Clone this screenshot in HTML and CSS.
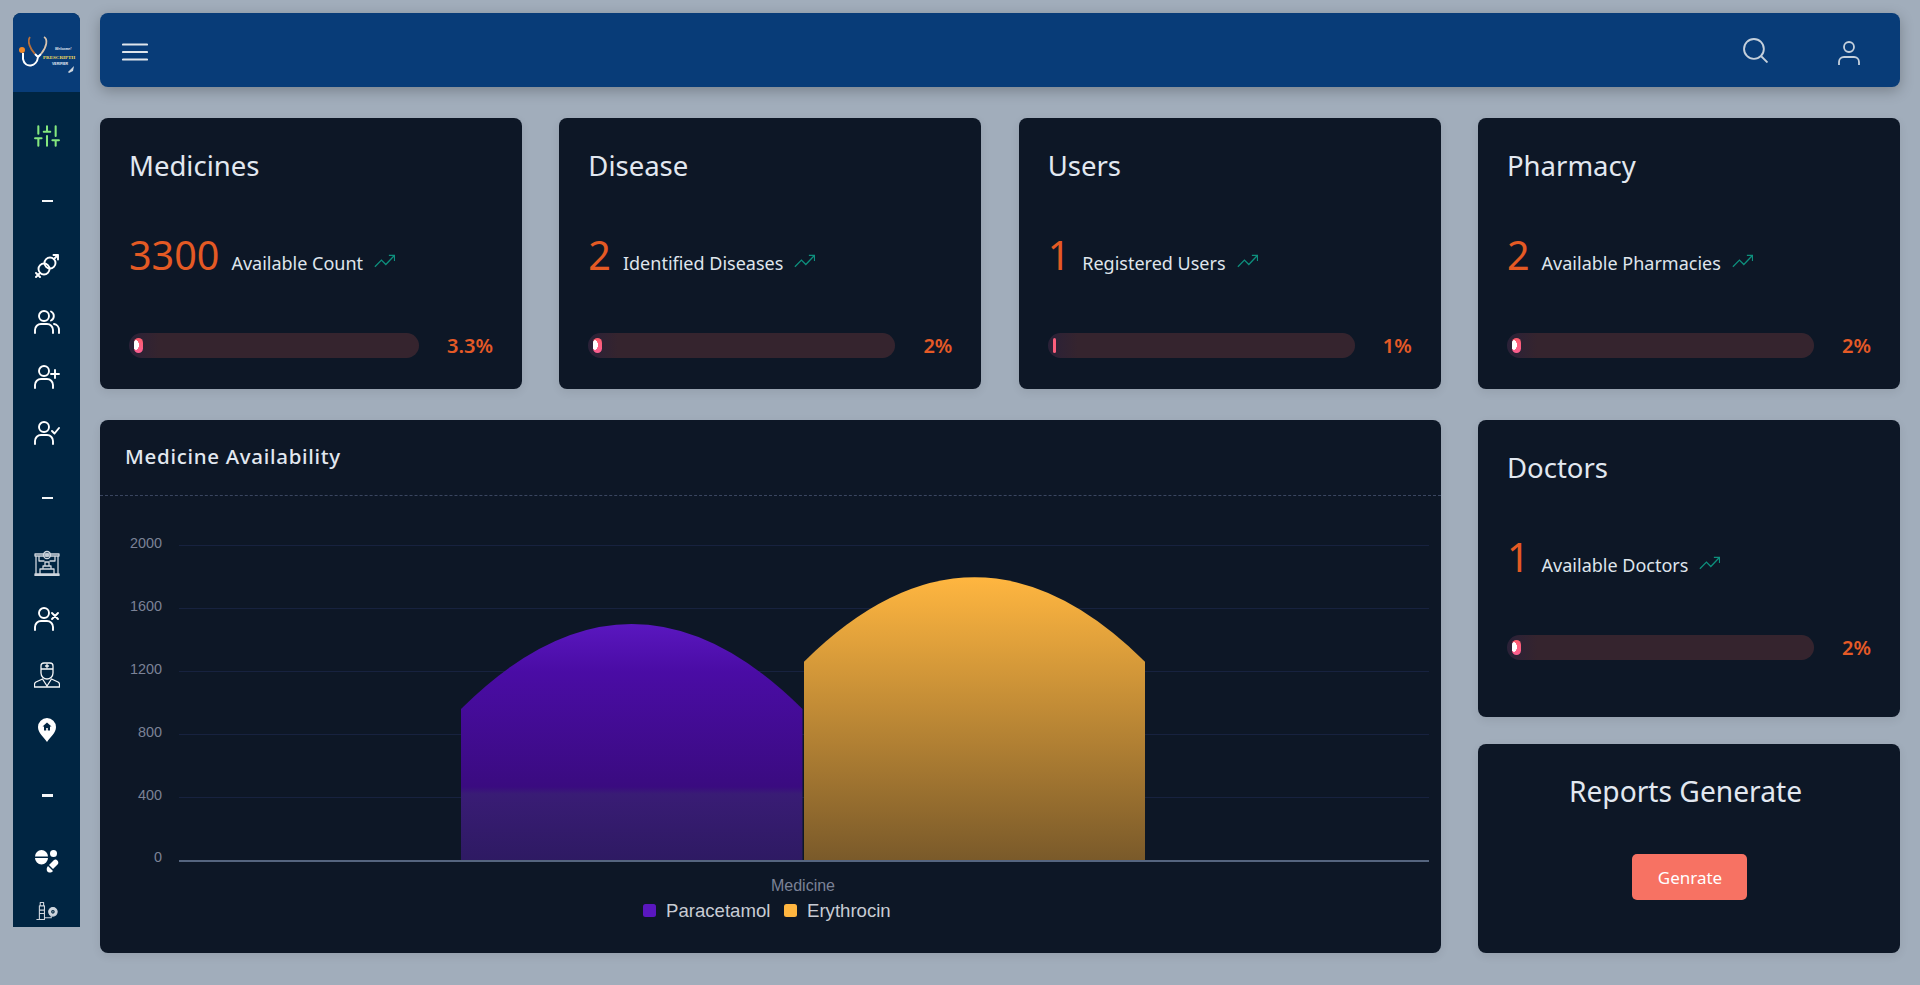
FILE: index.html
```html
<!DOCTYPE html>
<html lang="en">
<head>
    <meta charset="UTF-8">
    <meta name="viewport" content="width=device-width, initial-scale=1.0">
    <title>Prescripth Verifier - Dashboard</title>
    <link rel="stylesheet" href="styles.css">
</head>
<body>
    <aside class="sidebar">
        <div class="sidebar-logo">
            <svg viewBox="13 13 67 79" width="67" height="79">
                <path d="M30 37C27 41 30 49 35 54" fill="none" stroke="#b8703c" stroke-width="1.800"/>
                <path d="M44 37C48 39 47 47 41 54" fill="none" stroke="#d9c4ae" stroke-width="1.800"/>
                <path d="M35 54L38 57C37 67 25 69 23 59V53M41 54L38 57" fill="none" stroke="#fff" stroke-width="2"/>
                <circle cx="22" cy="50" r="3" fill="#f08a2c"/>
                <text x="43" y="59" class="logo-name">PRESCRIPTH</text>
                <text x="52" y="65" class="logo-sub">VERIFIER</text>
                <text x="55" y="50" class="logo-sub logo-hand">Welcome!</text>
                <path d="M68 72L74 66L73 71L69 73Z" fill="#cfd6de"/>
            </svg>
        </div>
        <nav class="nav-list">
            <a class="nav-item nav-active">
                <svg class="icon" viewBox="0 0 24 24"><path d="M4 21v-7M4 10V3M12 21v-9M12 8V3M20 21v-5M20 12V3M1 14h6M9 8h6M17 16h6"/></svg>
            </a>
            <div class="nav-dash"><span></span></div>
            <a class="nav-item">
                <svg class="icon" viewBox="0 0 26 26"><circle cx="10" cy="16" r="5.500"/><circle cx="16" cy="10" r="5.500"/><path d="M20 6l4-4M19.500 2H24v4.500M6 20l-4 4M2 20l4 4"/></svg>
            </a>
            <a class="nav-item">
                <svg class="icon" viewBox="0 0 26 26"><circle cx="10" cy="7" r="5"/><path d="M1 24v-3a6 6 0 0 1 6-6h6a6 6 0 0 1 6 6v3M17 2.500a5 5 0 0 1 0 9M20 15a6 6 0 0 1 5 6v3"/></svg>
            </a>
            <a class="nav-item">
                <svg class="icon" viewBox="0 0 26 26"><circle cx="10" cy="7" r="5"/><path d="M1 24v-3a6 6 0 0 1 6-6h6a6 6 0 0 1 6 6v3M21 6v8M17 10h8"/></svg>
            </a>
            <a class="nav-item">
                <svg class="icon" viewBox="0 0 26 26"><circle cx="10" cy="7" r="5"/><path d="M1 24v-3a6 6 0 0 1 6-6h6a6 6 0 0 1 6 6v3M18 11l2.500 2.500L25 8"/></svg>
            </a>
            <div class="nav-dash"><span></span></div>
            <a class="nav-item">
                <svg class="icon icon-thin" viewBox="0 0 26 26"><path d="M1 4h24v2H1zM2 6v19M24 6v19M1 24h24v1.500H1zM6 24v-5h14v5M9 19v-3h8v3M11 16v-4h4v4M5 6v5h5M21 6v5h-5"/><circle cx="13" cy="5" r="3.500"/><circle cx="13" cy="5" r="1.200"/></svg>
            </a>
            <a class="nav-item">
                <svg class="icon" viewBox="0 0 26 26"><circle cx="10" cy="7" r="5"/><path d="M1 24v-3a6 6 0 0 1 6-6h6a6 6 0 0 1 6 6v3M18 7l6 6M24 7l-6 6"/></svg>
            </a>
            <a class="nav-item">
                <svg class="icon icon-thin icon-bright" viewBox="0 0 26 26"><path d="M7 7V4a3 3 0 0 1 3-3h6a3 3 0 0 1 3 3v3zM7 7v4a6 6 0 0 0 12 0V7M13 2.500v3M11.500 4h3M8.500 17L2 20c-1 .5-1.500 1.500-1.500 2.500V25h25v-2.500c0-1-.5-2-1.500-2.500l-6.500-3L13 24z"/></svg>
            </a>
            <a class="nav-item">
                <svg class="icon-fill" viewBox="0 0 26 26"><path fill-rule="evenodd" d="M13 1a9 9 0 0 1 9 9c0 6-6 10.500-9 15-3-4.500-9-9-9-15a9 9 0 0 1 9-9zM13 5.500L8.500 9.500H10v4h2.200v-2.500h1.600v2.500H16v-4h1.500z"/></svg>
            </a>
            <div class="nav-dash"><span></span></div>
            <a class="nav-item">
                <svg class="icon-fill" viewBox="0 0 26 26"><path d="M1 8.500a6.500 6.500 0 0 1 13 0zM1 10h13a6.500 6.500 0 0 1-13 0z"/><circle cx="19.500" cy="5.500" r="3.500"/><path d="M15 17l5-5c2-2 5.500 1.500 4 4l-5 5zM14 18l5 5c-2 2.500-5.500 1.500-6 0-.5-1.500-.5-3.500 1-5z"/></svg>
            </a>
            <a class="nav-item nav-last">
                <svg class="icon icon-thin icon-small" viewBox="0 0 26 26"><path d="M1 23h8M4 23V7h6v16M5 3h4v4H5zM4 12h6M4 16h6M10 21h8v-2"/><circle cx="20" cy="14" r="5" fill="#cfd6de"/><circle cx="20" cy="14" r="1.500" stroke="#00263f"/></svg>
            </a>
        </nav>
    </aside>

    <div class="content">
        <header class="topbar">
            <svg class="menu-icon" viewBox="0 0 26 18"><path d="M1 1.500h24M1 9h24M1 16.500h24"/></svg>
            <div class="topbar-right">
                <svg class="search-icon" viewBox="0 0 24 24"><circle cx="10.500" cy="10.500" r="9.500"/><path d="M17.500 17.500l6 6"/></svg>
                <svg class="user-icon" viewBox="0 0 22 24"><circle cx="11" cy="6" r="5"/><path d="M1 24v-3a5 5 0 0 1 5-5h10a5 5 0 0 1 5 5v3"/></svg>
            </div>
        </header>

        <main class="dash-grid">
            <section class="card stat-card">
                <h2>Medicines</h2>
                <div class="stat-row">
                    <span class="stat-num">3300</span>
                    <span class="stat-label">Available Count</span>
                    <svg class="trend" viewBox="0 0 24 16"><path d="M1 14.500l7.500-7.500 5 5L23 2M17 1.500h6.500V8"/></svg>
                </div>
                <div class="progress-row">
                    <div class="progress"><span class="progress-fill"></span></div>
                    <span class="progress-val">3.3%</span>
                </div>
            </section>
            <section class="card stat-card">
                <h2>Disease</h2>
                <div class="stat-row">
                    <span class="stat-num">2</span>
                    <span class="stat-label">Identified Diseases</span>
                    <svg class="trend" viewBox="0 0 24 16"><path d="M1 14.500l7.500-7.500 5 5L23 2M17 1.500h6.500V8"/></svg>
                </div>
                <div class="progress-row">
                    <div class="progress"><span class="progress-fill"></span></div>
                    <span class="progress-val">2%</span>
                </div>
            </section>
            <section class="card stat-card">
                <h2>Users</h2>
                <div class="stat-row">
                    <span class="stat-num">1</span>
                    <span class="stat-label">Registered Users</span>
                    <svg class="trend" viewBox="0 0 24 16"><path d="M1 14.500l7.500-7.500 5 5L23 2M17 1.500h6.500V8"/></svg>
                </div>
                <div class="progress-row">
                    <div class="progress"><span class="progress-fill progress-thin"></span></div>
                    <span class="progress-val">1%</span>
                </div>
            </section>
            <section class="card stat-card">
                <h2>Pharmacy</h2>
                <div class="stat-row">
                    <span class="stat-num">2</span>
                    <span class="stat-label">Available Pharmacies</span>
                    <svg class="trend" viewBox="0 0 24 16"><path d="M1 14.500l7.500-7.500 5 5L23 2M17 1.500h6.500V8"/></svg>
                </div>
                <div class="progress-row">
                    <div class="progress"><span class="progress-fill"></span></div>
                    <span class="progress-val">2%</span>
                </div>
            </section>

            <section class="card chart-card">
                <div class="chart-title">Medicine Availability</div>
                <svg class="chart" viewBox="100 497 1341 456" width="1341" height="456">
                    <defs>
                        <linearGradient id="purpleFill" x1="0" y1="625" x2="0" y2="861" gradientUnits="userSpaceOnUse">
                            <stop offset="0" stop-color="#5a17bf"/>
                            <stop offset="0.2" stop-color="#4a0ca5"/>
                            <stop offset="0.69" stop-color="#3a0b80"/>
                            <stop offset="0.72" stop-color="#391c75"/>
                            <stop offset="1" stop-color="#2e1a63"/>
                        </linearGradient>
                        <linearGradient id="orangeFill" x1="0" y1="578" x2="0" y2="861" gradientUnits="userSpaceOnUse">
                            <stop offset="0" stop-color="#ffb640"/>
                            <stop offset="1" stop-color="#7a5a2a"/>
                        </linearGradient>
                    </defs>
                    <g class="grid-lines">
                        <path d="M179 546.500H1429M179 609.500H1429M179 672.500H1429M179 735.500H1429M179 798.500H1429"/>
                    </g>
                    <g class="axis-text">
                        <text x="162" y="549">2000</text>
                        <text x="162" y="612">1600</text>
                        <text x="162" y="675">1200</text>
                        <text x="162" y="738">800</text>
                        <text x="162" y="801">400</text>
                        <text x="162" y="863">0</text>
                    </g>
                    <path d="M461 861V710Q631.500 540 802.500 710V861Z" fill="url(#purpleFill)"/>
                    <path d="M804 861V662.700Q974.500 493.900 1145 662.700V861Z" fill="url(#orangeFill)"/>
                    <path class="axis-line" d="M179 862H1429"/>
                    <text class="axis-title" x="803" y="892">Medicine</text>
                    <rect x="643" y="905" width="13" height="13" rx="2.500" fill="#5a17bf"/>
                    <text class="legend-text" x="666" y="918">Paracetamol</text>
                    <rect x="784" y="905" width="13" height="13" rx="2.500" fill="#ffb640"/>
                    <text class="legend-text" x="807" y="918">Erythrocin</text>
                </svg>
            </section>

            <div class="side-col">
                <section class="card stat-card doctors-card">
                    <h2>Doctors</h2>
                    <div class="stat-row">
                        <span class="stat-num">1</span>
                        <span class="stat-label">Available Doctors</span>
                        <svg class="trend" viewBox="0 0 24 16"><path d="M1 14.500l7.500-7.500 5 5L23 2M17 1.500h6.500V8"/></svg>
                    </div>
                    <div class="progress-row">
                        <div class="progress"><span class="progress-fill"></span></div>
                        <span class="progress-val">2%</span>
                    </div>
                </section>
                <section class="card reports-card">
                    <h2>Reports Generate</h2>
                    <button class="gen-btn">Genrate</button>
                </section>
            </div>
        </main>
    </div>
</body>
</html>
```

FILE: styles.css
```css
body {
    margin: 0;
    height: 985px;
    overflow: hidden;
    box-sizing: border-box;
    padding: 13px 20px 32px 13px;
    display: flex;
    gap: 20px;
    background-color: #a1adbb;
    font-family: 'Noto Sans', sans-serif;
    color: #e2e8f0;
}

/* sidebar */
.sidebar {
    width: 67px;
    height: 914px;
    flex-shrink: 0;
    overflow: hidden;
    background-color: #002542;
    border-radius: 8px 8px 0 0;
}

.sidebar-logo {
    height: 79px;
    background-color: #083c78;
}

.sidebar-logo svg {
    display: block;
}

.logo-name {
    font-family: 'Liberation Serif', serif;
    font-size: 5px;
    font-weight: bold;
    fill: #f2dc5c;
}

.logo-sub {
    font-family: 'Liberation Sans', sans-serif;
    font-size: 3.5px;
    font-weight: bold;
    fill: #e8edf3;
}

.logo-hand {
    font-style: italic;
}

.nav-list {
    padding-top: 16px;
}

.nav-item {
    height: 55.7px;
    display: flex;
    align-items: center;
    justify-content: center;
    color: #fff;
}

.nav-item.nav-active {
    color: #84e87e;
}

.nav-item.nav-last {
    height: 46px;
}

.nav-dash {
    height: 74.5px;
    display: flex;
    align-items: center;
    justify-content: center;
}

.nav-dash span {
    width: 11px;
    height: 2.5px;
    margin-left: 1px;
    background-color: #f4f6f8;
}

.icon {
    width: 26px;
    height: 26px;
    fill: none;
    stroke: currentColor;
    stroke-width: 1.9;
    stroke-linecap: round;
    stroke-linejoin: round;
}

.icon-thin {
    stroke: #cfd6de;
    stroke-width: 1.3;
}

.icon-bright {
    stroke: #f4f6f8;
}

.icon-small {
    width: 22px;
    height: 22px;
}

.icon-fill {
    width: 26px;
    height: 26px;
    fill: #fff;
}

/* top bar */
.content {
    flex: 1;
    min-width: 0;
}

.topbar {
    height: 74px;
    margin-bottom: 31px;
    padding: 0 40px 0 22px;
    display: flex;
    align-items: center;
    justify-content: space-between;
    background-color: #083c78;
    border-radius: 8px;
    box-shadow: 0 4px 14px rgba(0, 0, 0, 0.25);
}

.menu-icon {
    width: 26px;
    height: 18px;
    margin-top: 3px;
    fill: none;
    stroke: #dfe5ec;
    stroke-width: 2.2;
    stroke-linecap: round;
}

.topbar-right {
    display: flex;
    align-items: center;
    gap: 70px;
}

.search-icon {
    width: 25px;
    height: 25px;
    fill: none;
    stroke: #c5d0dc;
    stroke-width: 1.8;
}

.user-icon {
    width: 22px;
    height: 24px;
    margin-top: 5px;
    fill: none;
    stroke: #c5d0dc;
    stroke-width: 1.8;
}

/* cards */
.dash-grid {
    display: grid;
    grid-template-columns: repeat(4, 422px);
    grid-template-rows: 271px 533px;
    gap: 31px 37.33px;
}

.card {
    background-color: #0d1726;
    border-radius: 8px;
    box-shadow: 0 3px 10px rgba(0, 0, 0, 0.08);
}

.card h2 {
    margin: 0;
    font-size: 27.5px;
    line-height: 36px;
    font-weight: 400;
    color: #e2e8f0;
}

.stat-card {
    box-sizing: border-box;
    padding: 30px 29px 0;
}

.stat-row {
    height: 50px;
    margin-top: 46px;
    display: flex;
    align-items: baseline;
}

.stat-num {
    font-size: 39.5px;
    line-height: 50px;
    font-weight: 400;
    color: #e45a24;
}

.stat-label {
    margin-left: 12px;
    font-size: 18px;
    color: #dfe5ec;
}

.trend {
    width: 21px;
    height: 14px;
    margin-left: 11px;
    margin-top: 12px;
    align-self: center;
    fill: none;
    stroke: #0e8f7d;
    stroke-width: 1.5;
}

.progress-row {
    margin-top: 52px;
    display: flex;
    align-items: center;
}

.progress {
    flex: 1;
    height: 25px;
    display: flex;
    align-items: center;
    padding-left: 5px;
    border-radius: 13px;
    background: linear-gradient(90deg, #2a2138 0, #35242e 30px);
}

.progress-fill {
    width: 9px;
    height: 15px;
    border-radius: 5px;
    background: radial-gradient(ellipse 3px 5px at 2px 7px, #fff 90%, transparent 100%), linear-gradient(#ff5d6c, #fb5f92);
}

.progress-fill.progress-thin {
    width: 3px;
    background: #fb5f7c;
}

.progress-val {
    margin-left: 28px;
    font-size: 20px;
    font-weight: 600;
    color: #e55a26;
}

/* chart */
.chart-card {
    grid-column: 1 / span 3;
    overflow: hidden;
}

.chart-title {
    height: 75px;
    padding-left: 25px;
    font-size: 20.5px;
    line-height: 72px;
    font-weight: 500;
    letter-spacing: 0.7px;
    color: #e2e8f0;
    border-bottom: 1px dashed #3a4660;
}

.chart {
    display: block;
}

.grid-lines path {
    fill: none;
    stroke: #17223f;
    stroke-width: 1;
}

.axis-line {
    stroke: #55657f;
    stroke-width: 2;
}

.axis-text text {
    font-family: 'Liberation Sans', sans-serif;
    font-size: 14.4px;
    text-anchor: end;
    fill: #7b8296;
}

.axis-title {
    font-family: 'Liberation Sans', sans-serif;
    font-size: 16px;
    text-anchor: middle;
    fill: #7b8296;
}

.legend-text {
    font-family: 'Liberation Sans', sans-serif;
    font-size: 18.6px;
    fill: #c8ccd4;
}

/* right column */
.side-col {
    display: flex;
    flex-direction: column;
    gap: 27px;
}

.doctors-card {
    height: 297px;
}

.reports-card {
    flex: 1;
    display: flex;
    flex-direction: column;
    align-items: center;
    padding-top: 29px;
}

.reports-card h2 {
    font-size: 28.2px;
    padding-right: 7px;
}

.gen-btn {
    width: 115px;
    height: 46px;
    margin-top: 45px;
    margin-left: 2px;
    border: none;
    border-radius: 5px;
    background-color: #f77263;
    color: #fff;
    font-family: 'Noto Sans', sans-serif;
    font-size: 17px;
}
```
